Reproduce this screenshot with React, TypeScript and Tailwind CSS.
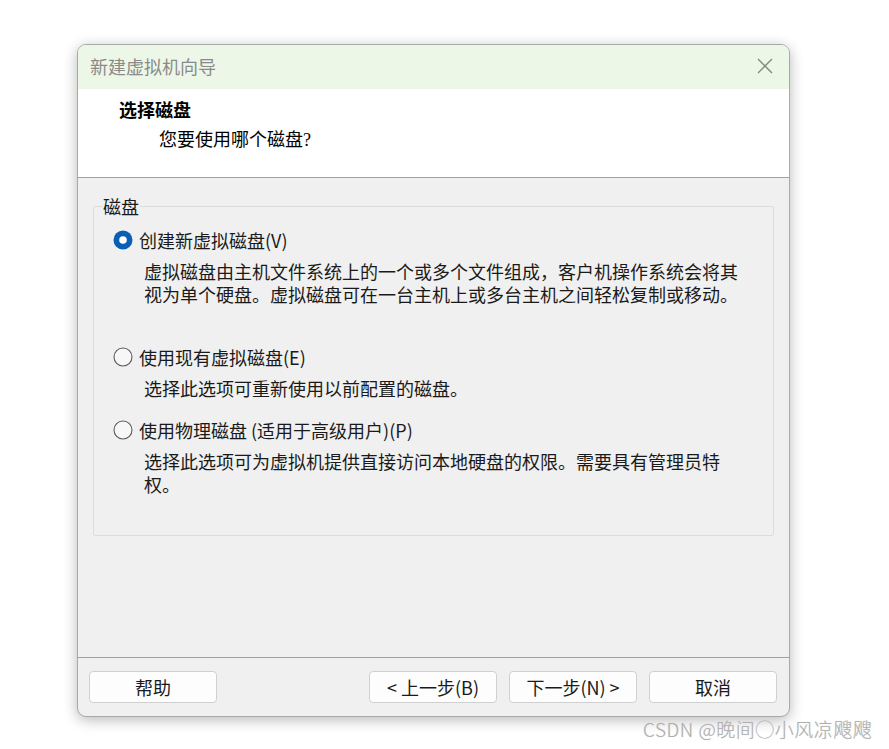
import React from "react";

const sans = { fontFamily: '"Noto Sans CJK SC", "Noto Sans", sans-serif' };

function Radio({ checked }: { checked?: boolean }) {
  return (
    <svg width="20" height="20" viewBox="0 0 20 20" className="shrink-0">
      {checked ? (
        <>
          <circle cx="10" cy="10" r="9.5" fill="#0a5fb4" />
          <circle cx="10" cy="10" r="3.8" fill="#ffffff" />
        </>
      ) : (
        <circle cx="10" cy="10" r="9" fill="#f7f7f7" stroke="#5a5a5a" strokeWidth="1.1" />
      )}
    </svg>
  );
}

function Option({
  checked,
  label,
  lines,
  className,
}: {
  checked?: boolean;
  label: string;
  lines: string[];
  className?: string;
}) {
  return (
    <div className={className}>
      <div className="flex h-[24px] items-center gap-[6px] pl-[19px]">
        <Radio checked={checked} />
        <span className="text-[18px] leading-[24px] text-[#1a1a1a]">{label}</span>
      </div>
      <div className="mt-[8px] pl-[50px] text-[18px] leading-[23px] text-[#1a1a1a]">
        {lines.map((l) => (
          <div key={l} className="h-[23px] whitespace-nowrap">
            {l}
          </div>
        ))}
      </div>
    </div>
  );
}

function Button({ children }: { children: React.ReactNode }) {
  return (
    <button className="flex h-[32px] w-[128px] items-center justify-center rounded-[4px] border border-[#d0d0d0] bg-[#fdfdfd] text-[18px] leading-none text-[#1a1a1a]">
      {children}
    </button>
  );
}

export default function App() {
  return (
    <div className="relative h-[749px] w-[889px] overflow-hidden bg-white pl-[77px] pt-[44px]" style={sans}>
      {/* Dialog */}
      <div className="flex h-[673px] w-[713px] flex-col overflow-hidden rounded-[9px] border border-[#a9a9a9] bg-[#f0f0f0] shadow-[0_3px_14px_rgba(0,0,0,0.28)]">
        {/* Title bar */}
        <div className="flex h-[44px] shrink-0 items-center justify-between bg-[#edf7e7] pb-[3px] pl-[12px] pr-[16px]">
          <span className="text-[18px] leading-none text-[#8a8a8a]">新建虚拟机向导</span>
          <svg width="16" height="16" viewBox="0 0 16 16">
            <path d="M1 1 L15 15 M15 1 L1 15" stroke="#7f8a7f" strokeWidth="1.4" fill="none" />
          </svg>
        </div>

        {/* Header */}
        <div className="h-[89px] shrink-0 border-b border-[#a0a0a0] bg-white pt-[10px]">
          <div
            className="pl-[41px] text-[18px] font-bold leading-[24px] text-black"
            style={{ fontFamily: '"Liberation Serif", "Noto Sans CJK SC", serif' }}
          >
            选择磁盘
          </div>
          <div
            className="mt-[5px] pl-[81px] text-[18px] leading-[24px] text-black"
            style={{ fontFamily: '"Liberation Serif", "Noto Sans CJK SC", serif' }}
          >
            您要使用哪个磁盘?
          </div>
        </div>

        {/* Body */}
        <div className="flex-1 px-[15px] pt-[17px]">
          <fieldset className="h-[341px] rounded-[2px] border border-[#dcdcdc]">
            <legend className="ml-[8px] px-[1px] text-[18px] leading-[22px] text-[#1a1a1a]">磁盘</legend>
            <Option
              className="mt-[11px]"
              checked
              label="创建新虚拟磁盘(V)"
              lines={[
                "虚拟磁盘由主机文件系统上的一个或多个文件组成，客户机操作系统会将其",
                "视为单个硬盘。虚拟磁盘可在一台主机上或多台主机之间轻松复制或移动。",
              ]}
            />
            <Option
              className="mt-[39px]"
              label="使用现有虚拟磁盘(E)"
              lines={["选择此选项可重新使用以前配置的磁盘。"]}
            />
            <Option
              className="mt-[18px]"
              label="使用物理磁盘 (适用于高级用户)(P)"
              lines={["选择此选项可为虚拟机提供直接访问本地硬盘的权限。需要具有管理员特", "权。"]}
            />
          </fieldset>
        </div>

        {/* Footer */}
        <div className="flex h-[59px] shrink-0 items-start border-t border-[#a0a0a0] pl-[11px] pr-[12px] pt-[13px]">
          <Button>帮助</Button>
          <div className="ml-auto flex gap-[12px]">
            <Button>&lt; 上一步(B)</Button>
            <Button>下一步(N) &gt;</Button>
            <Button>取消</Button>
          </div>
        </div>
      </div>

      {/* Watermark */}
      <div className="absolute left-[643px] top-[716px] whitespace-nowrap text-[19px] font-light leading-[26px] tracking-[0.5px] text-[#b0b0b0] [text-shadow:0_0_1px_#cfcfcf]">
        CSDN @晚间◯小风凉飕飕
      </div>
    </div>
  );
}
